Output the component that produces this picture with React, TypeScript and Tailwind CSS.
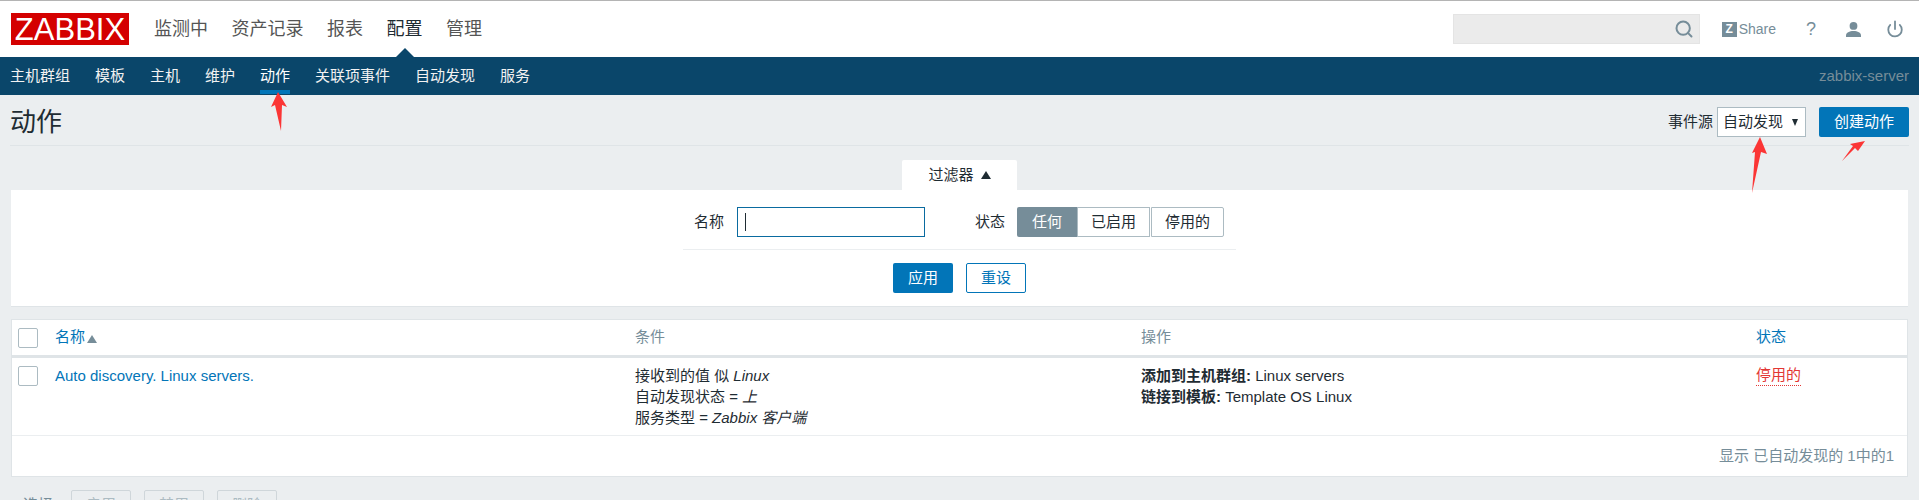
import { Search, Power } from 'lucide-react'

const font = "font-['Liberation_Sans','Noto_Sans_CJK_SC',sans-serif]"

const mainMenu = ['监测中', '资产记录', '报表', '配置', '管理']
const subMenu = ['主机群组', '模板', '主机', '维护', '动作', '关联项事件', '自动发现', '服务']

const Header = () => (
  <header className="flex h-[57px] items-center justify-between border-t-[1px] border-[#b4b4b4] bg-white pl-[11px] pr-[15px]">
    <div className="flex items-center">
      <div className="flex h-[32px] w-[118px] items-center justify-center bg-[#d40000] text-[31px] leading-none text-white">ZABBIX</div>
      <nav className="ml-[25px] flex gap-[23.5px] text-[18px] text-[#555]">
        {mainMenu.map((m) => (
          <span key={m} className={m === '配置' ? 'relative text-[#1f2c33]' : ''}>
            {m}
            {m === '配置' && (
              <span className="absolute left-1/2 top-[32px] h-0 w-0 -translate-x-1/2 border-x-[10px] border-b-[10px] border-x-transparent border-b-[#0a466a]" />
            )}
          </span>
        ))}
      </nav>
    </div>
    <div className="flex items-center">
      <div className="flex h-[30px] w-[247px] items-center justify-end border border-[#e4e4e4] bg-[#ebebeb] pr-[5px]">
        <Search size={20} strokeWidth={2.4} className="text-[#768d99]" />
      </div>
      <div className="ml-[22px] flex items-center text-[14px] text-[#768d99]">
        <span className="mr-[2px] flex h-[15px] w-[15px] items-center justify-center bg-[#768d99] text-[12px] font-bold leading-none text-white">Z</span>
        Share
      </div>
      <span className="ml-[30px] text-[18px] leading-none text-[#768d99]">?</span>
      <svg className="ml-[30px] h-[15px] w-[15px]" viewBox="0 0 15 15" fill="#768d99">
        <circle cx="7.5" cy="3.9" r="3.9" />
        <path d="M0 15v-1.5c0-3 3.4-4.5 7.5-4.5s7.5 1.5 7.5 4.5V15z" />
      </svg>
      <Power size={18} strokeWidth={2.4} className="ml-[25px] text-[#768d99]" />
    </div>
  </header>
)

const SubNav = () => (
  <nav className="flex h-[38px] items-center justify-between bg-[#0a466a] pl-[10px] pr-[10px] text-[15px]">
    <div className="flex gap-[25px] text-[#f2f2f2]">
      {subMenu.map((m) => (
        <span key={m} className={m === '动作' ? 'relative text-white' : ''}>
          {m}
          {m === '动作' && <span className="absolute inset-x-0 top-[25px] h-[4px] bg-[#0275b8]" />}
        </span>
      ))}
    </div>
    <span className="text-[#768d99]">zabbix-server</span>
  </nav>
)

const Title = () => (
  <div className="mx-[10px] flex h-[51px] items-center justify-between border-b border-[#dfe4e7] pb-[8px] pt-[12px]">
    <h1 className="text-[26px] font-normal leading-none text-[#1f2c33]">动作</h1>
    <div className="flex items-center text-[15px] text-[#1f2c33]">
      <span className="mr-[4px]">事件源</span>
      <div className="flex h-[30px] w-[89px] items-center justify-between border border-[#acbbc2] bg-white pl-[5px] pr-[7px]">
        自动发现
        <span className="h-0 w-0 border-x-[3.5px] border-t-[7px] border-x-transparent border-t-[#1f2c33]" />
      </div>
      <button className="ml-[13px] h-[30px] w-[90px] rounded-[2px] bg-[#0275b8] text-white">创建动作</button>
    </div>
  </div>
)

const Filter = () => (
  <div className="mx-[11px] mt-[14px]">
    <div className="flex justify-center">
      <div className="flex h-[30px] w-[115px] items-center justify-center rounded-t-[2px] bg-white text-[15px] text-[#1f2c33]">
        过滤器
        <span className="ml-[7px] h-0 w-0 border-x-[5px] border-b-[8px] border-x-transparent border-b-[#1f2c33]" />
      </div>
    </div>
    <div className="flex h-[117px] flex-col items-center border-b border-[#dfe4e7] bg-white text-[15px] text-[#1f2c33]">
      <div className="flex h-[60px] w-[553px] items-start border-b-[1px] border-[#ebeef0] pl-[11px] pt-[17px]">
        <span className="mr-[13px] leading-[30px]">名称</span>
        <div className="flex h-[30px] w-[188px] items-center border border-[#0a6ba0] pl-[7px]">
          <span className="h-[18px] w-px bg-[#1f2c33]" />
        </div>
        <span className="ml-[50px] mr-[12px] leading-[30px]">状态</span>
        <div className="flex h-[30px]">
          <span className="flex w-[60px] items-center justify-center rounded-l-[2px] bg-[#768d99] text-white">任何</span>
          <span className="flex w-[73px] items-center justify-center border border-[#acbbc2]">已启用</span>
          <span className="ml-px flex w-[73px] items-center justify-center rounded-r-[2px] border border-[#acbbc2]">停用的</span>
        </div>
      </div>
      <div className="mt-[13px] flex gap-[13px]">
        <button className="h-[30px] w-[60px] rounded-[2px] bg-[#0275b8] text-white">应用</button>
        <button className="h-[30px] w-[60px] rounded-[2px] border border-[#0275b8] text-[#0275b8]">重设</button>
      </div>
    </div>
  </div>
)

const Checkbox = () => <span className="block h-[20px] w-[20px] shrink-0 rounded-[2px] border border-[#acbbc2]" />

const Table = () => (
  <div className="mx-[11px] mt-[12px] border border-[#dfe4e7] bg-white text-[15px] text-[#1f2c33]">
    <div className="grid h-[38px] grid-cols-[623px_506px_615px_1fr] items-center border-b-[3px] border-[#dfe4e7]">
      <div className="flex items-center pl-[6px]">
        <Checkbox />
        <span className="ml-[17px] text-[#0275b8]">名称</span>
        <span className="ml-[2px] mt-[2px] h-0 w-0 border-x-[5px] border-b-[8px] border-x-transparent border-b-[#768d99]" />
      </div>
      <span className="text-[#768d99]">条件</span>
      <span className="text-[#768d99]">操作</span>
      <span className="text-[#0275b8]">状态</span>
    </div>
    <div className="grid h-[78px] grid-cols-[623px_506px_615px_1fr] items-start border-b border-[#ebeef0] pt-[7px] leading-[21px]">
      <div className="flex items-center pl-[6px]">
        <Checkbox />
        <span className="ml-[17px] text-[#0275b8]">Auto discovery. Linux servers.</span>
      </div>
      <div>
        <div>接收到的值 似 <i>Linux</i></div>
        <div>自动发现状态 = <i>上</i></div>
        <div>服务类型 = <i>Zabbix 客户端</i></div>
      </div>
      <div>
        <div><b>添加到主机群组:</b> Linux servers</div>
        <div><b>链接到模板:</b> Template OS Linux</div>
      </div>
      <span className="justify-self-start border-b border-dotted border-[#e33734] leading-[20px] text-[#e33734]">停用的</span>
    </div>
    <div className="flex h-[40px] items-center justify-end pr-[13px] text-[#768d99]">显示 已自动发现的 1中的1</div>
  </div>
)

const Footer = () => (
  <div className="ml-[23px] mt-[13px] flex h-[30px] items-center text-[15px] text-[#768d99]">
    <span className="w-[48px]">选择</span>
    <div className="flex gap-[13px]">
      {['启用', '禁用', '删除'].map((b) => (
        <button key={b} className="h-[30px] w-[60px] rounded-[2px] border border-[#cfd6da] bg-[#ebeef0] text-[#acbbc2]">{b}</button>
      ))}
    </div>
  </div>
)

// red hand-drawn annotation arrows on top of the screenshot
const Annotations = () => (
  <svg className="pointer-events-none absolute left-0 top-0 h-[500px] w-[1919px]" viewBox="0 0 1919 500" fill="#fb3535">
    <polygon points="278,92 287,107 282,105 281,131 275,105 271,107" />
    <polygon points="1760,137 1767,154 1761,152 1752,193 1755,152 1752,153" />
    <polygon points="1865,141 1858,151 1855,148 1842,161 1853,146 1850,144" />
  </svg>
)

export default function App() {
  return (
    <div className={`${font} relative h-[500px] overflow-hidden bg-[#ebeef0]`}>
      <Header />
      <SubNav />
      <Title />
      <Filter />
      <Table />
      <Footer />
      <Annotations />
    </div>
  )
}
